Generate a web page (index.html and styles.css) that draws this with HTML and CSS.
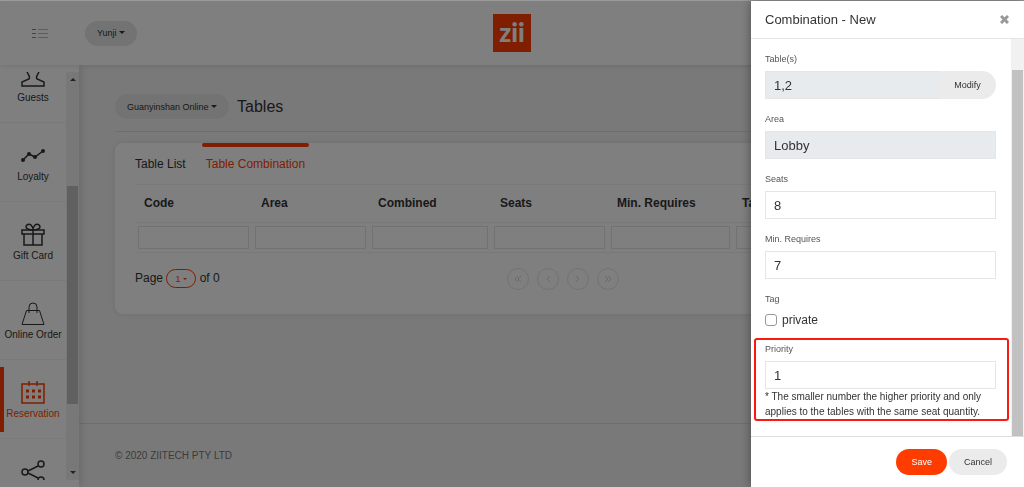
FILE: index.html
```html
<!DOCTYPE html>
<html lang="en">
<head>
    <meta charset="UTF-8">
    <meta name="viewport" content="width=device-width, initial-scale=1.0">
    <title>Tables</title>
    <link rel="stylesheet" href="styles.css">
</head>
<body>

    <div class="app">
        <header class="topbar">
            <div class="topbar-left">
                <button class="menu-btn" aria-label="Toggle menu">
                    <svg width="16" height="10" viewBox="0 0 16 10" fill="none" stroke="#888">
                        <path d="M0 1.5h4M0 5.5h4M0 9.5h4" />
                        <path d="M6 1.5h10M6 5.5h10M6 9.5h10" stroke="#bbb" />
                    </svg>
                </button>
                <button class="pill">Yunji <span class="caret"></span></button>
            </div>
            <a href="#" class="logo">zii</a>
            <div></div>
        </header>

        <div class="content">
            <aside class="sidebar">
                <nav class="nav">
                    <ul class="nav-list">
                        <li><a href="#" class="nav-item">
                            <svg width="24" height="24" viewBox="0 0 24 24">
                                <path d="M6 6c0 3 4 5 2 8l-7 3v4h22v-4l-7-3c-2-3 2-5 2-8" />
                            </svg>
                            Guests
                        </a></li>
                        <li><a href="#" class="nav-item">
                            <svg width="24" height="24" viewBox="0 0 24 24">
                                <path d="M2 16l6-6 6 3 8-6" />
                                <circle class="dot" cx="2" cy="16" r="2" />
                                <circle class="dot" cx="8" cy="10" r="2" />
                                <circle class="dot" cx="14" cy="13" r="2" />
                                <circle class="dot" cx="22" cy="7" r="2" />
                            </svg>
                            Loyalty
                        </a></li>
                        <li><a href="#" class="nav-item">
                            <svg width="24" height="24" viewBox="0 0 24 24">
                                <path d="M1 7h22v4H1zM3 11h18v11H3zM12 7v15" />
                                <path d="M12 7C9 7 5 6 5 4s3-4 5-2c1 1 2 3 2 5zM12 7c3 0 7-1 7-3s-3-4-5-2c-1 1-2 3-2 5z" />
                            </svg>
                            Gift Card
                        </a></li>
                        <li><a href="#" class="nav-item">
                            <svg width="24" height="24" viewBox="0 0 24 24">
                                <path class="thin" d="M5.500 8.500h13L23 22.500H1zM8 11V5a4 4 0 0 1 8 0v6" />
                            </svg>
                            Online Order
                        </a></li>
                        <li><a href="#" class="nav-item active">
                            <svg width="24" height="24" viewBox="0 0 24 24">
                                <path d="M1 3h22v19H1zM8 0v5M16 0v5" />
                                <path class="dots" d="M5 10h3M11 10h3M17 10h3M5 16h3M11 16h3M17 16h3" />
                            </svg>
                            Reservation
                        </a></li>
                        <li><a href="#" class="nav-item" aria-label="Share">
                            <svg width="24" height="24" viewBox="0 0 24 24">
                                <circle cx="4" cy="12" r="3" />
                                <circle cx="20" cy="4" r="3" />
                                <circle cx="20" cy="20" r="3" />
                                <path d="M7 11l10-5M7 13l10 5" />
                            </svg>
                        </a></li>
                    </ul>
                    <div class="scrollbar">
                        <span class="arrow-up"></span>
                        <div class="track"><div class="thumb nav-thumb"></div></div>
                        <span class="arrow-down"></span>
                    </div>
                </nav>
            </aside>

            <div class="page">
                <main class="main">
                    <div class="page-title">
                        <button class="pill">Guanyinshan Online <span class="caret"></span></button>
                        <h1>Tables</h1>
                    </div>

                    <section class="card">
                        <nav class="tabs">
                            <a href="#" class="tab">Table List</a>
                            <a href="#" class="tab active">Table Combination</a>
                        </nav>
                        <table>
                            <colgroup>
                                <col class="col-sm">
                                <col class="col-sm">
                                <col class="col-md">
                                <col class="col-sm">
                                <col class="col-lg">
                                <col>
                            </colgroup>
                            <thead>
                                <tr>
                                    <th>Code</th>
                                    <th>Area</th>
                                    <th>Combined</th>
                                    <th>Seats</th>
                                    <th>Min. Requires</th>
                                    <th>Tag</th>
                                </tr>
                            </thead>
                            <tbody>
                                <tr>
                                    <td><input type="text" aria-label="Code"></td>
                                    <td><input type="text" aria-label="Area"></td>
                                    <td><input type="text" aria-label="Combined"></td>
                                    <td><input type="text" aria-label="Seats"></td>
                                    <td><input type="text" aria-label="Min. Requires"></td>
                                    <td><input type="text" aria-label="Tag"></td>
                                </tr>
                            </tbody>
                        </table>
                        <div class="pagination">
                            <div class="page-info">
                                Page <button class="page-select">1 <span class="caret"></span></button> of 0
                            </div>
                            <div class="pager">
                                <button aria-label="First"><svg width="8" height="8" viewBox="0 0 8 8"><path d="M4 1L1 4l3 3M7 1L4 4l3 3" /></svg></button>
                                <button aria-label="Previous"><svg width="8" height="8" viewBox="0 0 8 8"><path d="M6 1L3 4l3 3" /></svg></button>
                                <button aria-label="Next"><svg width="8" height="8" viewBox="0 0 8 8"><path d="M2 1l3 3-3 3" /></svg></button>
                                <button aria-label="Last"><svg width="8" height="8" viewBox="0 0 8 8"><path d="M1 1l3 3-3 3M4 1l3 3-3 3" /></svg></button>
                            </div>
                        </div>
                    </section>
                </main>
                <footer class="footer">© 2020 ZIITECH PTY LTD</footer>
            </div>
        </div>
    </div>

    <div class="backdrop"></div>

    <form class="drawer">
        <div class="drawer-header">
            <h2>Combination - New</h2>
            <button type="button" class="close" aria-label="Close">
                <svg width="9" height="9" viewBox="0 0 9 9"><path d="M1 1l7 7M8 1L1 8" /></svg>
            </button>
        </div>

        <div class="drawer-body">
            <div class="fields">
                <div class="field">
                    <label for="tables">Table(s)</label>
                    <div class="input-group">
                        <input type="text" id="tables" value="1,2" readonly>
                        <button type="button" class="modify">Modify</button>
                    </div>
                </div>
                <div class="field">
                    <label for="area">Area</label>
                    <input type="text" id="area" value="Lobby" readonly>
                </div>
                <div class="field">
                    <label for="seats">Seats</label>
                    <input type="text" id="seats" value="8">
                </div>
                <div class="field">
                    <label for="min">Min. Requires</label>
                    <input type="text" id="min" value="7">
                </div>
                <div class="field">
                    <span class="field-label">Tag</span>
                    <div class="check">
                        <input type="checkbox" id="private">
                        <label for="private">private</label>
                    </div>
                </div>
                <div class="field highlight">
                    <label for="priority">Priority</label>
                    <input type="text" id="priority" value="1">
                    <p class="note">* The smaller number the higher priority and only applies to the tables with the same seat quantity.</p>
                </div>
            </div>
            <div class="scrollbar light">
                <div class="thumb"></div>
            </div>
        </div>

        <div class="drawer-footer">
            <button type="submit" class="btn btn-save">Save</button>
            <button type="button" class="btn">Cancel</button>
        </div>
    </form>

</body>
</html>
```
FILE: styles.css
```css
* {
    box-sizing: border-box;
}

body {
    margin: 0;
    font-family: "Liberation Sans", Arial, sans-serif;
    font-size: 12px;
    color: #333;
    background-color: #f3f3f3;
}

button, input {
    font-family: inherit;
    color: inherit;
}

button {
    border: none;
    padding: 0;
    background: none;
    cursor: pointer;
}

a {
    color: inherit;
    text-decoration: none;
}

h1, h2 {
    margin: 0;
    font-weight: normal;
}

/* layout */

.app {
    display: flex;
    flex-direction: column;
    height: 100vh;
    border-top: 1px solid #a5a5a5;
}

.topbar {
    display: grid;
    grid-template-columns: 1fr auto 1fr;
    align-items: center;
    height: 64px;
    flex: none;
    padding: 0 32px;
    background-color: #fff;
    box-shadow: 0 0 6px rgba(0, 0, 0, 0.15);
    z-index: 2;
}

.topbar-left {
    display: flex;
    align-items: center;
    gap: 36px;
}

.menu-btn {
    display: flex;
    width: 17px;
}

.pill {
    height: 25px;
    padding: 0 12px;
    border-radius: 13px;
    background-color: #e6e6e6;
    font-size: 9px;
}

.caret {
    display: inline-block;
    border: 3px solid transparent;
    border-top-color: currentColor;
    border-bottom: none;
    vertical-align: 2px;
}

.logo {
    width: 38px;
    height: 38px;
    background-color: #ff3c00;
    color: #fff;
    font-family: Lato, sans-serif;
    font-size: 26px;
    font-weight: 900;
    line-height: 36px;
    text-align: center;
}

.content {
    display: flex;
    flex: 1;
    min-height: 0;
}

/* sidebar */

.sidebar {
    width: 79px;
    flex: none;
    padding: 7px 0;
    background-color: #fff;
    box-shadow: 0 0 10px rgba(0, 0, 0, 0.2);
    z-index: 1;
}

.nav {
    display: flex;
    height: 100%;
    overflow: hidden;
}

.nav-list {
    flex: 1;
    margin: -28px 0 0;
    padding: 0;
    list-style: none;
}

.nav-item {
    display: flex;
    flex-direction: column;
    align-items: center;
    gap: 3px;
    height: 79px;
    padding-top: 21px;
    border-bottom: 1px solid #f3f3f3;
    font-size: 10px;
    line-height: 12px;
    white-space: nowrap;
}

.nav-item svg {
    flex: none;
    fill: none;
    stroke: currentColor;
    stroke-width: 1.5;
}

.nav-item .thin {
    stroke-width: 1;
}

.nav-item .dot {
    fill: currentColor;
    stroke: none;
}

.nav-item .dots {
    stroke-width: 3;
}

.nav-item.active {
    color: #ff3c00;
    background: linear-gradient(#ff3c00, #ff3c00) left center / 4px 65px no-repeat;
}

.scrollbar {
    display: flex;
    flex-direction: column;
    align-items: center;
    width: 13px;
    flex: none;
    padding: 6px 0;
    background-color: #f1f1f1;
}

.track {
    flex: 1;
    width: 11px;
    margin: 4px 0;
    padding-top: 101px;
}

.thumb {
    width: 11px;
    flex: 1;
    background-color: #c1c1c1;
}

.nav-thumb {
    height: 218px;
}

.arrow-up, .arrow-down {
    border: 3px solid transparent;
    border-top: none;
    border-bottom-color: #444;
}

.arrow-down {
    border-top: 3px solid #444;
    border-bottom: none;
}

/* page */

.page {
    display: flex;
    flex-direction: column;
    flex: 1;
    min-width: 0;
}

.main {
    flex: 1;
    padding: 29px 36px 0;
}

.page-title {
    display: flex;
    align-items: center;
    gap: 8px;
    padding-bottom: 12px;
    border-bottom: 1px solid #ddd;
}

h1 {
    font-size: 16px;
}

.card {
    margin-top: 11px;
    padding: 0 20px 24px;
    border-radius: 8px;
    background-color: #fff;
    box-shadow: 0 0 6px rgba(0, 0, 0, 0.1);
}

.tabs {
    display: flex;
    gap: 16px;
    border-bottom: 1px solid #f3f3f3;
}

.tab {
    padding-top: 14px;
    height: 41px;
}

.tab.active {
    padding: 0 4px;
    color: #ff3c00;
}

.tab.active::before {
    content: "";
    display: block;
    height: 4px;
    margin: 0 -4px 10px;
    border-radius: 2px;
    background-color: #ff3c00;
}

table {
    width: 100%;
    table-layout: fixed;
    border-collapse: collapse;
}

.col-sm {
    width: 117px;
}

.col-md {
    width: 122px;
}

.col-lg {
    width: 125px;
}

th {
    height: 37px;
    padding: 0 9px;
    text-align: left;
}

td {
    padding: 3px;
    border-top: 1px solid #f0f0f0;
    border-bottom: 1px solid #f0f0f0;
}

td input {
    display: block;
    width: 100%;
    height: 23px;
    border: 1px solid #e5e5e5;
}

.pagination {
    display: flex;
    align-items: center;
    margin-top: 15px;
}

.page-info {
    width: 372px;
}

.page-select {
    width: 30px;
    height: 19px;
    border: 1px solid #ff3c00;
    border-radius: 10px;
    color: #ff3c00;
    font-size: 9px;
}

.page-select .caret {
    border-width: 2px;
    border-bottom: none;
}

.pager {
    display: flex;
    gap: 8px;
}

.pager button {
    display: flex;
    align-items: center;
    justify-content: center;
    width: 22px;
    height: 22px;
    border: 1px solid #e5e5e5;
    border-radius: 50%;
}

.pager svg {
    fill: none;
    stroke: #d5d5d5;
}

.footer {
    height: 64px;
    padding: 0 36px;
    border-top: 1px solid #ddd;
    color: #777;
    font-size: 10px;
    line-height: 64px;
}

/* drawer */

.backdrop {
    position: fixed;
    inset: 1px 0 0;
    background-color: rgba(0, 0, 0, 0.5);
    z-index: 10;
}

.drawer {
    position: fixed;
    top: 1px;
    right: 0;
    bottom: 0;
    display: flex;
    flex-direction: column;
    width: 273px;
    background-color: #fff;
    box-shadow: 0 0 10px rgba(0, 0, 0, 0.4);
    z-index: 11;
}

.drawer-header {
    display: flex;
    align-items: center;
    justify-content: space-between;
    height: 38px;
    padding: 0 15px 0 14px;
    border-bottom: 1px solid #e5e5e5;
}

h2 {
    font-size: 13px;
}

.close {
    display: flex;
}

.close svg {
    stroke: #999;
    stroke-width: 3;
}

.drawer-body {
    display: flex;
    flex: 1;
    min-height: 0;
}

.fields {
    flex: 1;
    padding: 14px 15px 0 14px;
    overflow: hidden;
}

.scrollbar.light {
    padding: 31px 0 0;
}

.field {
    margin-bottom: 14px;
}

.field > label, .field-label {
    display: block;
    margin-bottom: 6px;
    color: #555;
    font-size: 9px;
    line-height: 12px;
}

.field input[type="text"] {
    display: block;
    width: 100%;
    height: 28px;
    padding: 0 8px;
    border: 1px solid #e5e5e5;
    font-size: 13px;
}

.field input[readonly] {
    background-color: #e7ebee;
}

.field .input-group {
    display: flex;
}

.field .input-group input {
    flex: 1;
    min-width: 0;
    border-right: none;
}

.modify {
    width: 57px;
    border-radius: 0 14px 14px 0;
    background-color: #ebebeb;
    font-size: 9px;
}

.check {
    display: flex;
    align-items: center;
    gap: 5px;
    height: 18px;
}

.check input {
    appearance: none;
    width: 12px;
    height: 12px;
    margin: 0;
    border: 1px solid #999;
    border-radius: 3px;
}

.highlight {
    margin: -5px -13px 0 -11px;
    padding: 3px 11px 0 9px;
    border: 2px solid #f81c10;
    border-radius: 3px;
}

.note {
    margin: 0;
    font-size: 10px;
    line-height: 15px;
}

.drawer-footer {
    display: flex;
    align-items: center;
    justify-content: flex-end;
    gap: 2px;
    height: 51px;
    padding: 0 17px;
    border-top: 1px solid #ddd;
}

.btn {
    height: 26px;
    padding: 0 15px;
    border-radius: 13px;
    background-color: #ebebeb;
    font-size: 9px;
}

.btn-save {
    background-color: #ff3c00;
    color: #fff;
}
```
